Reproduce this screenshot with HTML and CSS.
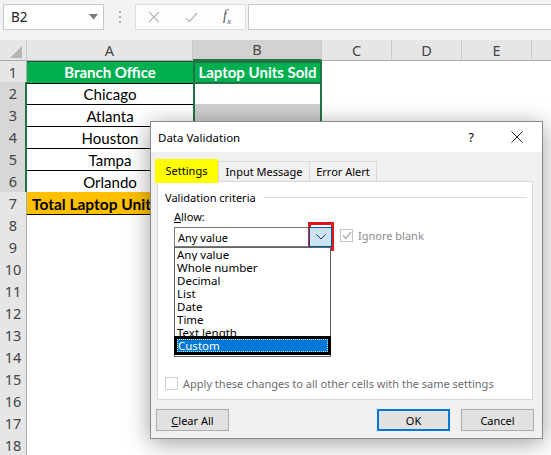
FILE: index.html
```html
<!DOCTYPE html>
<html>
<head>
<meta charset="utf-8">
<link rel="stylesheet" href="styles.css">
</head>
<body>
<div class="app">
  <div class="fbar">
    <div class="namebox"><span>B2</span><svg width="9" height="6" viewBox="0 0 9 6"><path d="M0 0H9L4.5 5.5Z" fill="#7a7a7a"/></svg></div>
    <div class="dots"><i></i><i></i><i></i></div>
    <div class="fbtns">
      <svg width="12" height="12" viewBox="0 0 12 12"><path d="M1 1L11 11M11 1L1 11" stroke="#b8b8b8" stroke-width="1.2"/></svg>
      <svg width="13" height="11" viewBox="0 0 13 11"><path d="M1 6L4.5 9.5L12 1" stroke="#b8b8b8" stroke-width="1.3" fill="none"/></svg>
      <span class="fx">f<sub>x</sub></span>
    </div>
    <div class="finput"></div>
  </div>

  <div class="sheet">
    <div class="hrow">
      <div class="corner"><svg width="12" height="12" viewBox="0 0 12 12"><path d="M12 0V12H0Z" fill="#b5b5b5"/></svg></div>
      <div class="ch">A</div>
      <div class="ch sel">B</div>
      <div class="ch">C</div>
      <div class="ch">D</div>
      <div class="ch">E</div>
      <div class="ch last"></div>
    </div>
    <div class="row r1"><div class="rh">1</div><div class="ca head">Branch Office</div><div class="cb head">Laptop Units Sold</div></div>
    <div class="row"><div class="rh sel">2</div><div class="ca">Chicago</div><div class="cb active"></div></div>
    <div class="row"><div class="rh sel">3</div><div class="ca">Atlanta</div><div class="cb shade"></div></div>
    <div class="row"><div class="rh sel">4</div><div class="ca">Houston</div><div class="cb shade"></div></div>
    <div class="row"><div class="rh sel">5</div><div class="ca">Tampa</div><div class="cb shade"></div></div>
    <div class="row"><div class="rh sel">6</div><div class="ca">Orlando</div><div class="cb shade lastsel"></div></div>
    <div class="row"><div class="rh">7</div><div class="ca total">Total Laptop Units Sold</div><div class="cb plain"></div></div>
    <div class="row"><div class="rh">8</div></div>
    <div class="row"><div class="rh">9</div></div>
    <div class="row"><div class="rh">10</div></div>
    <div class="row"><div class="rh">11</div></div>
    <div class="row"><div class="rh">12</div></div>
    <div class="row"><div class="rh">13</div></div>
    <div class="row"><div class="rh">14</div></div>
    <div class="row"><div class="rh">15</div></div>
    <div class="row"><div class="rh">16</div></div>
    <div class="row"><div class="rh">17</div></div>
    <div class="row"><div class="rh">18</div></div>
  </div>

  <div class="dlg">
    <div class="dlg-title">
      <span class="dlg-name">Data Validation</span>
      <span class="help">?</span>
      <svg class="close" width="12" height="12" viewBox="0 0 12 12"><path d="M0.5 0.5L11.5 11.5M11.5 0.5L0.5 11.5" stroke="#222" stroke-width="1"/></svg>
    </div>
    <div class="dlg-body">
      <div class="tabs">
        <div class="tab active">Settings</div>
        <div class="tab t2">Input Message</div>
        <div class="tab t3">Error Alert</div>
      </div>
      <div class="panel">
        <div class="legend"><span>Validation criteria</span><div class="rule"></div></div>
        <div class="allow-label"><u>A</u>llow:</div>
        <div class="allow-row">
          <div class="combo-wrap">
            <div class="combo"><span>Any value</span></div>
            <div class="ring"><div class="combo-btn"><svg width="10" height="6" viewBox="0 0 10 6"><path d="M0.5 0.5L5 5L9.5 0.5" stroke="#333" stroke-width="1" fill="none"/></svg></div></div>
            <div class="list">
              <div class="item">Any value</div>
              <div class="item">Whole number</div>
              <div class="item">Decimal</div>
              <div class="item">List</div>
              <div class="item">Date</div>
              <div class="item">Time</div>
              <div class="item">Text length</div>
              <div class="item custom"><span>Custom</span></div>
            </div>
          </div>
          <div class="chk disabled"><span class="box"><svg width="10" height="9" viewBox="0 0 10 9"><path d="M1 4.5L3.8 7.5L9 1" stroke="#b0b0b0" stroke-width="1.3" fill="none"/></svg></span><span>Ignore blank</span></div>
        </div>
        <div class="apply"><span class="box"></span><span>Apply these changes to all other cells with the same settings</span></div>
      </div>
      <div class="buttons">
        <div class="btn"><u>C</u>lear All</div>
        <div class="btn ok">OK</div>
        <div class="btn">Cancel</div>
      </div>
    </div>
  </div>
</div>
</body>
</html>
```

FILE: styles.css
```css
* { box-sizing: border-box; }
body { margin: 0; background: #fff; font-family: "Noto Sans", sans-serif; }
.app { position: relative; width: 551px; height: 455px; overflow: hidden; background: #fff; }

/* formula bar */
.fbar { height: 40px; background: #f3f3f3; display: flex; align-items: flex-start; padding-top: 4px; }
.namebox { margin-left: 3px; width: 101px; height: 26px; background: #fff; border: 1px solid #c8c8c8; display: flex; align-items: center; justify-content: space-between; padding: 0 5px 0 7px; font-size: 13.5px; color: #222; }
.dots { width: 31px; height: 26px; display: flex; flex-direction: column; align-items: center; justify-content: center; gap: 3px; }
.dots i { width: 2px; height: 2px; background: #aaa; display: block; }
.fbtns { width: 111px; height: 26px; background: #fdfdfd; border: 1px solid #dedede; display: flex; align-items: center; justify-content: space-between; padding: 0 14px 0 12px; }
.fx { font-family: "Liberation Serif", serif; font-style: italic; font-size: 14px; color: #555; line-height: 1; }
.fx sub { font-size: 9px; }
.finput { flex: 1; margin-left: 2px; height: 26px; background: #fff; border: 1px solid #c8c8c8; border-right: none; }

/* sheet */
.sheet { display: flex; flex-direction: column; }
.hrow, .row { display: grid; grid-template-columns: 27px 166px 129px 70px 70px 70px 1fr; }
.hrow { height: 21px; background: #e6e6e6; border-bottom: 1px solid #ababab; }
.corner { display: flex; align-items: flex-end; justify-content: flex-end; padding: 0 4px 3px 0; border-right: 1px solid #c8c8c8; }
.ch { font-size: 14.5px; color: #444; text-align: center; line-height: 21px; border-right: 1px solid #c8c8c8; }
.ch.sel { background: #d2d2d2; border-bottom: 2px solid #217346; line-height: 19px; }
.ch.last { border-right: none; }
.row { height: 22px; }
.row.r1 { height: 21px; }
.rh { background: #e6e6e6; border-right: 1px solid #ababab; border-bottom: 1px solid #c8c8c8; font-size: 14.5px; color: #444; text-align: center; line-height: 22px; }
.rh.sel { background: #d7d7d7; border-right: 2px solid #217346; padding-left: 1px; }
.ca { font-family: Lato, sans-serif; font-size: 15px; color: #000; text-align: center; line-height: 20px; padding-top: 2px; border-bottom: 1px solid #000; white-space: nowrap; overflow: hidden; }
.ca.head, .cb.head { background: #00b050; color: #fff; font-weight: 700; }
.ca.head { border-top: 1px solid #1a5e38; line-height: 20px; padding-top: 0; }
.cb { border-left: 2px solid #217346; border-right: 2px solid #217346; border-bottom: 1px solid #000; }
.cb.head { font-family: Lato, sans-serif; font-size: 15px; text-align: center; line-height: 19px; border: 2px solid #217346; white-space: nowrap; }
.cb.shade { background: #cfcfcf; }
.cb.plain { border: none; }
.ca.total { background: #ffc000; font-weight: 700; font-size: 15.5px; text-align: left; padding-left: 5px; }

/* dialog */
.dlg { position: absolute; left: 150px; top: 121px; width: 393px; height: 318px; background: #f0f0f0; border: 1px solid #8a8a8a; box-shadow: 0 4px 22px rgba(0,0,0,0.38); display: flex; flex-direction: column; font-size: 11px; color: #000; }
.dlg-title { height: 30px; background: #fff; display: flex; align-items: center; padding-left: 7px; }
.dlg-name { flex: 1; font-size: 11.5px; }
.help { font-size: 12.5px; margin-right: 37px; }
.close { margin-right: 19px; }
.dlg-body { flex: 1; display: flex; flex-direction: column; }
.tabs { display: flex; align-items: flex-end; padding-left: 4px; height: 29px; position: relative; z-index: 1; }
.tab { height: 20px; border: 1px solid #d9d9d9; border-bottom: none; background: #f0f0f0; display: flex; align-items: center; justify-content: center; padding-bottom: 1px; }
.tab.active { width: 63px; height: 24px; margin-bottom: -2px; background: #ffff00; border: none; padding-bottom: 2px; }
.tab.t2 { width: 92px; }
.tab.t3 { width: 67px; border-left: none; }
.panel { margin: 0 9px 0 6px; height: 219px; background: #fff; border: 1px solid #d9d9d9; padding: 7px 0 0 7px; display: flex; flex-direction: column; }
.legend { display: flex; align-items: center; height: 16px; gap: 8px; padding-right: 5px; }
.rule { flex: 1; height: 1px; background: #dcdcdc; }
.allow-label { margin: 4px 0 0 9px; height: 16px; line-height: 16px; }
.allow-row { display: flex; margin: 2px 0 0 9px; align-items: flex-start; height: 141px; }
.combo-wrap { position: relative; display: flex; width: 157px; height: 20px; }
.combo { width: 135px; height: 20px; border: 1px solid #7a7a7a; border-right: none; display: flex; align-items: center; padding-left: 3px; background: #fff; }
.ring { position: absolute; left: 134px; top: -5px; width: 26px; height: 29px; border: 3px solid #e0161b; }
.combo-btn { margin: 2px 0 0 -2px; width: 23px; height: 20px; background: #cce4f7; border: 1px solid #005499; display: flex; align-items: center; justify-content: center; }
.list { position: absolute; left: 0; top: 20px; width: 157px; height: 110px; background: #fff; border: 1px solid #646464; display: flex; flex-direction: column; padding-top: 0; }
.item { height: 13px; line-height: 13px; padding-left: 2px; white-space: nowrap; overflow: hidden; font-size: 11.5px; }
.item.custom { height: 19px; margin: -3px -1px 0 -1px; border: 3px solid #000; background: #0078d7; color: #fff; padding: 0; line-height: 11px; }
.item.custom span { display: block; height: 13px; border: 1px dotted rgba(255,255,255,0.8); line-height: 11px; }
.chk { display: flex; align-items: center; gap: 5px; margin: 0 0 0 9px; height: 16px; }
.chk.disabled { color: #8d8d8d; }
.box { width: 13px; height: 13px; border: 1px solid #c4c4c4; background: #fff; display: flex; align-items: center; justify-content: center; flex: none; }
.apply { display: flex; align-items: center; gap: 5px; margin-top: 8px; color: #6d6d6d; white-space: nowrap; }
.apply .box { border-color: #cfcfcf; }
.buttons { display: flex; padding: 9px 8px 0 5px; gap: 11px; }
.btn { width: 73px; height: 22px; background: #e1e1e1; border: 1px solid #adadad; display: flex; align-items: center; justify-content: center; }
.btn.ok { margin-left: auto; border: 2px solid #0078d7; }
```
